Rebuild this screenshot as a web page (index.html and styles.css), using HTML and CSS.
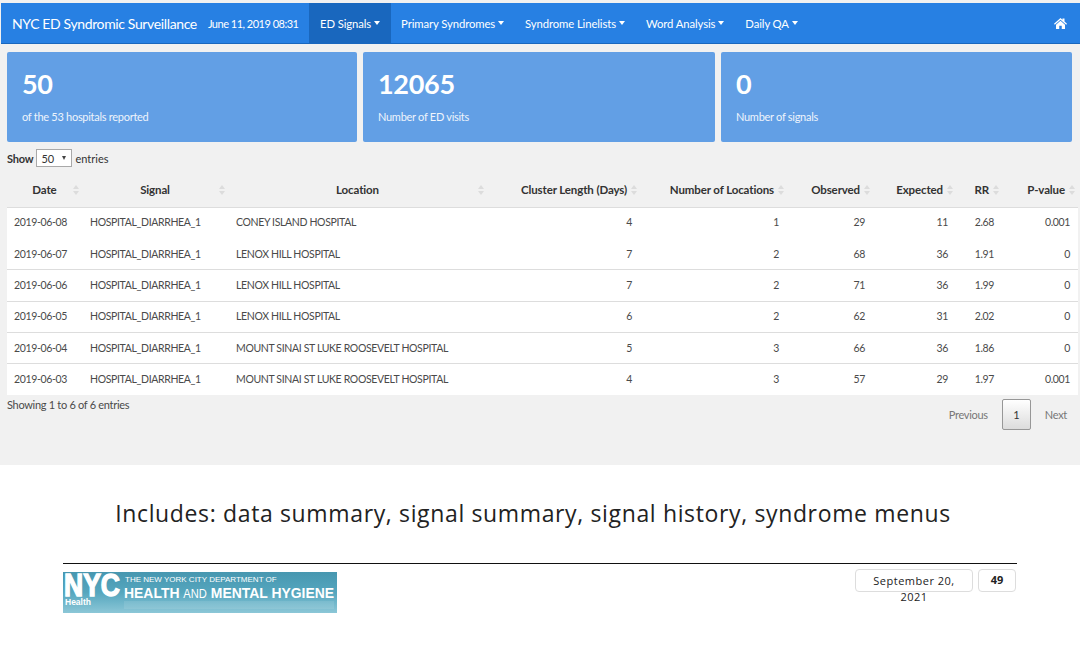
FILE: index.html
```html
<!DOCTYPE html>
<html lang="en">
<head>
    <meta charset="UTF-8">
    <title>NYC ED Syndromic Surveillance</title>
    <link rel="stylesheet" href="styles.css">
</head>
<body>
<div class="screen">
    <nav class="navbar">
        <span class="brand">NYC ED Syndromic Surveillance</span>
        <span class="stamp">June 11, 2019 08:31</span>
        <ul class="menu">
            <li class="active">ED Signals <i class="caret"></i></li>
            <li>Primary Syndromes <i class="caret"></i></li>
            <li>Syndrome Linelists <i class="caret"></i></li>
            <li>Word Analysis <i class="caret"></i></li>
            <li>Daily QA <i class="caret"></i></li>
        </ul>
        <svg class="home" viewBox="0 0 26 22" width="13" height="11">
            <path fill="#fff" d="M13 0 L17 3.6 V1 H21 V7.2 L26 11.7 L24.4 13.4 L13 3.3 L1.6 13.4 L0 11.7 Z M4 13.6 L13 5.6 L22 13.6 V22 H15.5 V15.5 H10.5 V22 H4 Z"/>
        </svg>
    </nav>

    <div class="boxes">
        <div class="box">
            <div class="big">50</div>
            <div class="note">of the 53 hospitals reported</div>
        </div>
        <div class="box">
            <div class="big">12065</div>
            <div class="note">Number of ED visits</div>
        </div>
        <div class="box">
            <div class="big">0</div>
            <div class="note">Number of signals</div>
        </div>
    </div>

    <div class="length">
        <b>Show</b>
        <span class="select">50 <i class="arrow"></i></span>
        <span>entries</span>
    </div>

    <table class="signals">
        <colgroup>
            <col class="c-date"><col class="c-signal"><col class="c-location"><col class="c-cluster">
            <col class="c-num"><col class="c-obs"><col class="c-exp"><col class="c-rr"><col class="c-p">
        </colgroup>
        <thead>
        <tr>
            <th class="mid">Date</th>
            <th class="mid">Signal</th>
            <th class="mid">Location</th>
            <th>Cluster Length (Days)</th>
            <th>Number of Locations</th>
            <th>Observed</th>
            <th>Expected</th>
            <th>RR</th>
            <th>P-value</th>
        </tr>
        </thead>
        <tbody>
        <tr class="first">
            <td>2019-06-08</td><td>HOSPITAL_DIARRHEA_1</td><td>CONEY ISLAND HOSPITAL</td>
            <td>4</td><td>1</td><td>29</td><td>11</td><td>2.68</td><td>0.001</td>
        </tr>
        <tr>
            <td>2019-06-07</td><td>HOSPITAL_DIARRHEA_1</td><td>LENOX HILL HOSPITAL</td>
            <td>7</td><td>2</td><td>68</td><td>36</td><td>1.91</td><td>0</td>
        </tr>
        <tr>
            <td>2019-06-06</td><td>HOSPITAL_DIARRHEA_1</td><td>LENOX HILL HOSPITAL</td>
            <td>7</td><td>2</td><td>71</td><td>36</td><td>1.99</td><td>0</td>
        </tr>
        <tr>
            <td>2019-06-05</td><td>HOSPITAL_DIARRHEA_1</td><td>LENOX HILL HOSPITAL</td>
            <td>6</td><td>2</td><td>62</td><td>31</td><td>2.02</td><td>0</td>
        </tr>
        <tr>
            <td>2019-06-04</td><td>HOSPITAL_DIARRHEA_1</td><td>MOUNT SINAI ST LUKE ROOSEVELT HOSPITAL</td>
            <td>5</td><td>3</td><td>66</td><td>36</td><td>1.86</td><td>0</td>
        </tr>
        <tr>
            <td>2019-06-03</td><td>HOSPITAL_DIARRHEA_1</td><td>MOUNT SINAI ST LUKE ROOSEVELT HOSPITAL</td>
            <td>4</td><td>3</td><td>57</td><td>29</td><td>1.97</td><td>0.001</td>
        </tr>
        </tbody>
    </table>

    <div class="table-foot">
        <div class="info">Showing 1 to 6 of 6 entries</div>
        <div class="pager">
            <span>Previous</span>
            <span class="current">1</span>
            <span>Next</span>
        </div>
    </div>
</div>

<p class="caption">Includes: data summary, signal summary, signal history, syndrome menus</p>

<footer class="slide-foot">
    <svg class="logo" viewBox="0 0 274 41" width="274" height="41">
        <defs>
            <linearGradient id="logo-bg" x1="0" y1="0" x2="0" y2="1">
                <stop offset="0" stop-color="#4797b0"/>
                <stop offset="0.5" stop-color="#55a6be"/>
                <stop offset="1" stop-color="#8cc7d7"/>
            </linearGradient>
        </defs>
        <rect width="274" height="41" fill="url(#logo-bg)"/>
        <rect x="61" y="29" width="210" height="8" fill="#fff" opacity="0.1"/>
        <text transform="translate(1 24) scale(1.02 1.22)" class="logo-nyc">NYC</text>
        <text x="2" y="33" class="logo-small">Health</text>
        <text x="62" y="10" class="logo-top">THE NEW YORK CITY DEPARTMENT OF</text>
        <text transform="translate(61 26) scale(0.93 1)" class="logo-main">HEALTH <tspan class="logo-and">AND</tspan> MENTAL HYGIENE</text>
    </svg>
    <div class="date-box">September 20, 2021</div>
    <div class="num-box">49</div>
</footer>
</body>
</html>
```

FILE: styles.css
```css
* {
    box-sizing: border-box;
}

body {
    margin: 0;
    background: #fff;
    font-family: 'Lato', sans-serif;
    color: #333;
}

.screen {
    height: 465px;
    padding-top: 3px;
    background: #f1f1f1;
}

.navbar {
    display: flex;
    align-items: center;
    height: 41px;
    margin-left: 1px;
    background: #2780e3;
    color: #fff;
    border-bottom: 1px solid #1967be;
}

.brand {
    margin-left: 11px;
    font-size: 14px;
    letter-spacing: -0.37px;
    white-space: nowrap;
}

.stamp {
    margin-left: 11px;
    font-size: 11px;
    letter-spacing: -0.5px;
    white-space: nowrap;
}

.menu {
    display: flex;
    height: 100%;
    margin: 0 0 0 11px;
    padding: 0;
    list-style: none;
    font-size: 11.3px;
    letter-spacing: -0.1px;
}

.menu li {
    display: flex;
    align-items: center;
    gap: 3px;
    padding: 0 10.5px;
    white-space: nowrap;
}

.menu .active {
    background: #1967be;
}

.caret {
    width: 0;
    height: 0;
    border-top: 4px solid #fff;
    border-left: 3.5px solid transparent;
    border-right: 3.5px solid transparent;
}

.home {
    margin-left: auto;
    margin-right: 13px;
}

.boxes {
    display: grid;
    grid-template-columns: 350px 352px 351px;
    gap: 6px;
    margin: 8px 0 0 7px;
}

.box {
    height: 90px;
    padding: 16px 15px;
    background: #629fe5;
    border-radius: 2px;
    color: #fff;
}

.big {
    font-size: 27px;
    font-weight: 700;
    line-height: 32px;
    letter-spacing: -0.3px;
}

.note {
    margin-top: 9px;
    font-size: 11px;
    line-height: 16px;
    letter-spacing: -0.28px;
    color: #eef4fc;
}

.length {
    display: flex;
    align-items: center;
    gap: 3px;
    height: 18px;
    margin: 7px 0 0 7px;
    font-size: 11px;
}

.length b {
    letter-spacing: -0.2px;
}

.select {
    display: flex;
    align-items: center;
    justify-content: space-between;
    width: 36px;
    height: 18px;
    padding: 0 5px 0 4px;
    background: #fff;
    border: 1px solid #a9a9a9;
    font-size: 11px;
}

.arrow {
    width: 0;
    height: 0;
    border-top: 4px solid #444;
    border-left: 2.5px solid transparent;
    border-right: 2.5px solid transparent;
}

.signals {
    width: 1071px;
    margin: 8px 0 0 7px;
    border-collapse: collapse;
    table-layout: fixed;
    font-size: 10.5px;
}

.c-date { width: 75px; }
.c-signal { width: 146px; }
.c-location { width: 259px; }
.c-cluster { width: 153px; }
.c-num { width: 147px; }
.c-obs { width: 86px; }
.c-exp { width: 83px; }
.c-rr { width: 46px; }
.c-p { width: 76px; }

.signals th {
    position: relative;
    height: 32px;
    padding: 0 13px 2px 0;
    border-bottom: 1px solid #ddd;
    font-size: 11.5px;
    font-weight: 700;
    letter-spacing: -0.12px;
    text-align: right;
    white-space: nowrap;
}

.signals th.mid {
    padding: 0 0 2px;
    text-align: center;
}

/* sort arrows, as DataTables puts them */
.signals th::before,
.signals th::after {
    content: "";
    position: absolute;
    right: 3px;
    border-left: 3px solid transparent;
    border-right: 3px solid transparent;
}

.signals th::before {
    top: 10px;
    border-bottom: 4px solid #dcdcdc;
}

.signals th::after {
    top: 16px;
    border-top: 4px solid #dcdcdc;
}

.signals td {
    height: 31.4px;
    padding: 0 8px 1px;
    background: #fff;
    border-top: 1px solid #ddd;
    text-align: right;
    letter-spacing: -0.35px;
    white-space: nowrap;
    color: #4a4a4a;
}

.signals td:nth-child(-n+3) {
    text-align: left;
}

.signals td:first-child {
    padding-left: 7px;
}

.signals .first td {
    border-top: 0;
}

.signals tbody tr:nth-child(2) td {
    border-top-color: #fff;
}

.table-foot {
    display: flex;
    justify-content: space-between;
    align-items: flex-start;
    padding: 2px 13px 0 7px;
    font-size: 11px;
}

.info {
    line-height: 16px;
    letter-spacing: -0.3px;
    color: #4a4a4a;
}

.pager {
    display: flex;
    align-items: center;
    gap: 14px;
    margin-top: 2px;
    letter-spacing: -0.3px;
    color: #777;
}

.current {
    width: 29px;
    height: 31px;
    background: linear-gradient(#fff, #dcdcdc);
    border: 1px solid #979797;
    border-radius: 2px;
    color: #333;
    text-align: center;
    line-height: 29px;
}

.caption {
    margin: 33px 0 0;
    padding-right: 14px;
    font-family: 'Open Sans', sans-serif;
    font-size: 23px;
    line-height: 30px;
    letter-spacing: 0.64px;
    text-align: center;
    color: #222;
}

.slide-foot {
    display: flex;
    align-items: flex-start;
    width: 954px;
    margin: 35px 0 0 63px;
    padding-top: 5px;
    border-top: 1px solid #111;
}

.logo {
    display: block;
    margin-top: 3px;
    overflow: visible;
}

.logo text {
    fill: #fff;
    font-family: 'Liberation Sans', sans-serif;
}

.logo .logo-nyc {
    font-size: 26px;
    font-weight: 700;
    stroke: #fff;
    stroke-width: 1.2px;
}

.logo-small {
    font-size: 8.5px;
    font-weight: 700;
}

.logo-top {
    font-size: 8px;
}

.logo-main {
    font-size: 15px;
    font-weight: 700;
}

.logo-and {
    font-size: 12px;
    font-weight: 400;
}

.date-box {
    width: 118px;
    height: 23px;
    margin-left: 518px;
    padding: 3px 15px 0;
    border: 1px solid #ddd;
    border-radius: 4px;
    font-family: 'Open Sans', sans-serif;
    font-size: 11px;
    line-height: 16px;
    letter-spacing: 0.5px;
    text-align: center;
    color: #222;
}

.num-box {
    width: 38px;
    height: 23px;
    margin-left: 5px;
    border: 1px solid #ddd;
    border-radius: 4px;
    font-family: 'Open Sans', sans-serif;
    font-size: 11px;
    font-weight: 700;
    line-height: 20px;
    text-align: center;
    color: #222;
}
```
